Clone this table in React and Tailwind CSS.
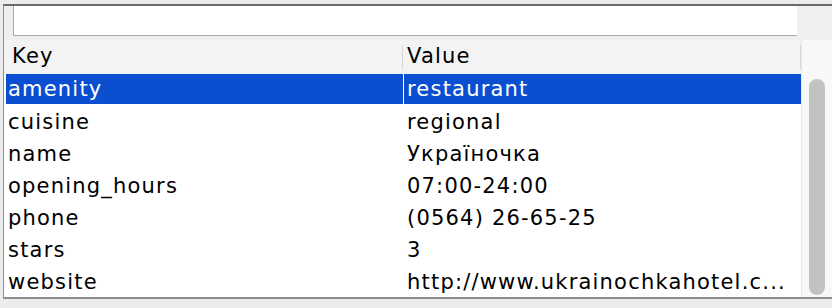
import React from 'react';

const tags = [
  ['amenity', 'restaurant'],
  ['cuisine', 'regional'],
  ['name', 'Україночка'],
  ['opening_hours', '07:00-24:00'],
  ['phone', '(0564) 26-65-25'],
  ['stars', '3'],
  ['website', 'http://www.ukrainochkahotel.c...'],
];

export default function App() {
  const selected = 0;

  return (
    <div className="w-[832px] h-[308px] bg-[#ececec] overflow-hidden pt-[4px] pl-[3px] font-['DejaVu_Sans',sans-serif] text-[21px] tracking-[1.2px] text-black">
      <div className="h-[295px] border-t-2 border-l border-b-2 border-t-[#6a6a6a] border-l-[#8e8e8e] border-b-[#8e8e8e] bg-[#efefef] flex flex-col">
        {/* filter field */}
        <div className="h-[30px] ml-[9px] mr-[35px] bg-white border-l border-b border-[#a9a9a9]" />

        <div className="mt-[4px] flex flex-1 min-h-0">
          <div className="flex-1 flex flex-col bg-white">
            {/* header */}
            <div className="h-[34px] flex bg-[#f3f3f3]">
              <div className="w-[399px] pl-[8px] flex items-center border-r border-[#d6d6d6] my-[5px]">Key</div>
              <div className="flex-1 pl-[4px] flex items-center border-r border-[#d6d6d6] my-[5px]">Value</div>
            </div>
            {/* rows */}
            <div className="flex flex-col pl-[2px]">
              {tags.map(([k, v], i) => (
                <div
                  key={k}
                  className={`h-[32px] flex leading-none ${i === selected ? 'text-white' : ''}`}
                >
                  <div className={`w-[397px] pl-[2px] flex items-center whitespace-nowrap ${i === selected ? 'bg-[#0b4fd0] mb-[2px]' : ''}`}>
                    {k}
                  </div>
                  <div className="w-[1px]" />
                  <div className={`flex-1 pl-[3px] flex items-center whitespace-nowrap ${i === selected ? 'bg-[#0b4fd0] mb-[2px]' : ''}`}>
                    {v}
                  </div>
                </div>
              ))}
            </div>
          </div>

          {/* scrollbar */}
          <div className="w-[31px] bg-[#f8f8f8] border-l border-[#e8e8e8] flex justify-center pt-[39px] pb-[2px]">
            <div className="w-[16px] h-full rounded-full bg-[#c2c2c2]" />
          </div>
        </div>
      </div>
    </div>
  );
}
